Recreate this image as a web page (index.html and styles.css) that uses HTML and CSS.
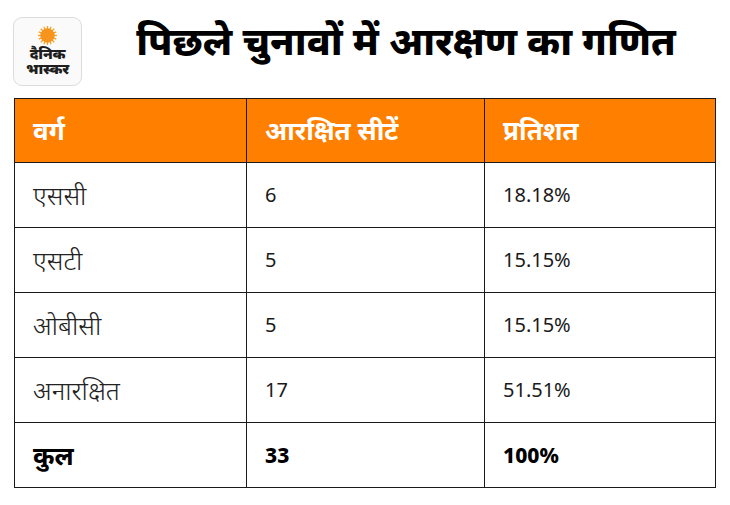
FILE: index.html
```html
<!DOCTYPE html>
<html lang="hi">
<head>
<meta charset="utf-8">
<link rel="stylesheet" href="styles.css">
</head>
<body>
<div class="page">
  <header class="head">
    <div class="logo">
      <svg class="sun" viewBox="0 0 20 20" width="19" height="19">
        <g stroke="#f7a21b" stroke-width="1.3">
          <line x1="10" y1="0" x2="10" y2="20"/>
          <line x1="0" y1="10" x2="20" y2="10"/>
          <line x1="2.9" y1="2.9" x2="17.1" y2="17.1"/>
          <line x1="17.1" y1="2.9" x2="2.9" y2="17.1"/>
          <line x1="6.2" y1="0.8" x2="13.8" y2="19.2"/>
          <line x1="13.8" y1="0.8" x2="6.2" y2="19.2"/>
          <line x1="0.8" y1="6.2" x2="19.2" y2="13.8"/>
          <line x1="0.8" y1="13.8" x2="19.2" y2="6.2"/>
        </g>
        <circle cx="10" cy="10" r="7.6" fill="#f7941d"/>
      </svg>
      <div class="logo-text"><span class="ln">दैनिक</span><span class="ln">भास्कर</span></div>
    </div>
    <h1 class="title">पिछले चुनावों में आरक्षण का गणित</h1>
  </header>
  <table class="tbl">
    <colgroup>
      <col class="c1"><col class="c2"><col class="c3">
    </colgroup>
    <thead>
      <tr><th>वर्ग</th><th>आरक्षित सीटें</th><th>प्रतिशत</th></tr>
    </thead>
    <tbody>
      <tr><td class="name">एससी</td><td>6</td><td>18.18%</td></tr>
      <tr><td class="name">एसटी</td><td>5</td><td>15.15%</td></tr>
      <tr><td class="name">ओबीसी</td><td>5</td><td>15.15%</td></tr>
      <tr><td class="name">अनारक्षित</td><td>17</td><td>51.51%</td></tr>
      <tr class="total"><td class="name">कुल</td><td>33</td><td>100%</td></tr>
    </tbody>
  </table>
</div>
</body>
</html>
```
FILE: styles.css
```css
* { box-sizing: border-box; }
html, body { margin: 0; padding: 0; background: #fff; }
body { font-family: "Noto Sans", "Noto Sans Devanagari", sans-serif; color: #111; }
.page { width: 730px; height: 505px; padding: 17px 0 0 14px; }
.head { display: flex; align-items: flex-start; height: 70px; }
.logo {
  width: 69px; height: 69px; margin-left: -1px; flex: none;
  border: 1.5px solid #dcdcdc; border-radius: 9px; background: #fafafa;
  display: flex; flex-direction: column; align-items: center;
  padding-top: 8px;
}
.sun { display: block; width: 19px; height: 19px; flex: none; }
.logo-text {
  display: flex; flex-direction: column; align-items: center;
  font-weight: 900; font-size: 15px; text-align: center; color: #1e1e1e;
  letter-spacing: -0.2px;
}
.logo-text .ln { display: block; line-height: 16px; height: 15px; }
.title {
  flex: 1; margin: 0; text-align: center;
  font-size: 39px; font-weight: 800; color: #000; line-height: 46px;
}
.tbl {
  margin-top: 11px;
  width: 701px; border-collapse: collapse; table-layout: fixed;
}
.c1 { width: 232px; } .c2 { width: 238px; } .c3 { width: 231px; }
.tbl th, .tbl td {
  border: 1px solid #1a1a1a; text-align: left; padding: 0 0 0 18px;
  font-size: 20px; line-height: 30px;
}
.tbl th { background: #ff8000; color: #fff; font-weight: 700; height: 64px; font-size: 26px; padding-bottom: 2px; }
.tbl td { height: 65px; color: #1a1a1a; font-weight: 400; }
.tbl td.name { font-size: 26px; font-weight: 340; color: #222; }
.tbl .total td { font-weight: 800; color: #000; font-size: 21px; }
.tbl .total td.name { font-weight: 700; font-size: 26px; }
```
